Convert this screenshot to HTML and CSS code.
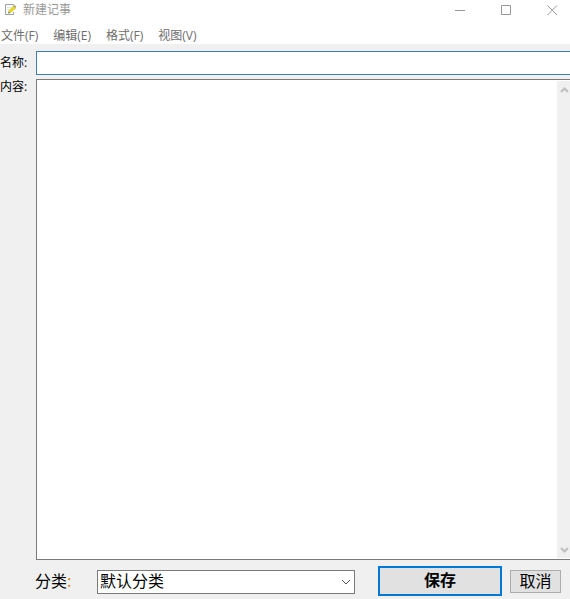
FILE: index.html
```html
<!DOCTYPE html>
<html lang="zh-CN">
<head>
<meta charset="utf-8">
<meta name="viewport" content="width=device-width, initial-scale=1">
<title>新建记事</title>
<link rel="stylesheet" href="styles.css">
</head>
<body>
<form class="window">
  <header class="titlebar">
    <svg class="app-icon" width="12" height="12" viewBox="0 0 12 12" aria-hidden="true">
      <path d="M8.500 1.500V.5h-8v10h8V8" fill="#fff" stroke="#9aa3a0"/>
      <path d="M2 3.500h4M2 5.500h2" stroke="#dde3e0"/>
      <path d="M3.500 9l.5-2.500 4.500-4.500 2.300 2-5 4.500z" fill="#e8d820" stroke="#c4b52c" stroke-width=".5"/>
      <path d="M8.300 2l1-1.200 2 1.900-1.100 1.200z" fill="#a5a274"/>
      <path d="M3 9.500l.7-2 1.500 1.400z" fill="#777"/>
    </svg>
    <h1 class="title">新建记事</h1>
    <div class="controls">
      <button type="button" class="control" aria-label="最小化"><svg width="11" height="11"><path d="M0 5.500h10"/></svg></button>
      <button type="button" class="control" aria-label="最大化"><svg width="11" height="11"><path d="M.5 .5h9v9h-9z"/></svg></button>
      <button type="button" class="control" aria-label="关闭"><svg width="11" height="11"><path d="M.5 .5l9.500 9.500M10 .5L.5 10"/></svg></button>
    </div>
  </header>
  <nav class="menu">
    <button type="button">文件(F)</button>
    <button type="button">编辑(E)</button>
    <button type="button">格式(F)</button>
    <button type="button">视图(V)</button>
  </nav>
  <main class="fields">
    <label for="name">名称:</label>
    <input id="name" class="name" type="text">
    <label for="content">内容:</label>
    <div class="editor">
      <textarea id="content"></textarea>
      <div class="scrollbar">
        <button type="button" aria-label="向上滚动"><svg width="10" height="8"><path d="M1 6l3.500-3.500L8 6"/></svg></button>
        <button type="button" aria-label="向下滚动"><svg width="10" height="8"><path d="M1 2l3.500 3.500L8 2"/></svg></button>
      </div>
    </div>
  </main>
  <footer class="actions">
    <label for="category">分类<span class="colon">:</span></label>
    <div class="combo">
      <select id="category"><option>默认分类</option></select>
      <svg class="arrow" width="10" height="6" aria-hidden="true"><path d="M1 1l4 4 4-4"/></svg>
    </div>
    <button type="submit" class="save">保存</button>
    <button type="button" class="cancel">取消</button>
  </footer>
</form>
</body>
</html>
```
FILE: styles.css
```css
* {
  box-sizing: border-box;
}

body {
  margin: 0;
  overflow: hidden;
  background: #f0f0f0;
  color: #000;
  font-family: "Open Sans", "Noto Sans CJK SC", sans-serif;
  font-size: 12px;
}

button,
input,
textarea,
select {
  margin: 0;
  padding: 0;
  border: 0;
  border-radius: 0;
  outline: 0;
  background: none;
  color: inherit;
  font: inherit;
}

svg {
  fill: none;
}

.window {
  display: flex;
  flex-direction: column;
  height: 100vh;
}

.titlebar {
  display: flex;
  align-items: center;
  height: 20px;
  padding-left: 5px;
  background: #fff;
}

.title {
  margin: 0 0 0 6px;
  color: #999;
  font-size: 12px;
  font-weight: 400;
  line-height: 22px;
}

.controls {
  display: flex;
  gap: 10px;
  margin-left: auto;
}

.control {
  display: flex;
  align-items: center;
  justify-content: center;
  width: 36px;
  height: 20px;
  stroke: #999;
}

.menu {
  display: flex;
  align-items: flex-end;
  gap: 15px;
  height: 24px;
  padding: 0 1px;
  background: #fff;
  color: #6d6d6d;
}

.menu button {
  height: 16px;
  line-height: 16px;
}

.fields {
  display: grid;
  flex: 1;
  grid-template: 24px minmax(0, 1fr) / 36px minmax(0, 1fr);
  row-gap: 4px;
  padding-top: 7px;
}

.fields label {
  line-height: 16px;
}

.fields label[for="name"] {
  line-height: 24px;
}

.name {
  width: 100%;
  padding: 0 4px;
  border: 1px solid #3c7fb1;
  border-right: 0;
  background: #fff;
}

.editor {
  display: flex;
  padding: 1px 0;
  border: 1px solid #7a7a7a;
  border-right: 0;
  background: #fff;
}

.editor textarea {
  flex: 1;
  min-width: 0;
  resize: none;
}

.scrollbar {
  display: flex;
  flex-direction: column;
  justify-content: space-between;
  width: 13px;
  background: #f0f0f0;
}

.scrollbar button {
  display: flex;
  align-items: center;
  justify-content: flex-end;
  height: 17px;
  stroke: #bfbfbf;
  stroke-width: 2;
}

.actions {
  display: flex;
  align-items: center;
  height: 39px;
  padding: 4px 9px 0 35px;
  font-family: "Noto Sans CJK SC", sans-serif;
  font-size: 16px;
  line-height: 20px;
}

.actions label {
  width: 62px;
  padding-bottom: 4px;
}

.colon {
  color: #d08a30;
}

.combo {
  display: grid;
  flex: 1;
  align-items: center;
  margin-right: 23px;
}

.combo select,
.combo .arrow {
  grid-area: 1 / 1;
}

.combo select {
  width: 100%;
  height: 24px;
  padding: 0 20px 4px 2px;
  border: 1px solid #7a7a7a;
  background: #fff;
  line-height: 18px;
  appearance: none;
}

.arrow {
  justify-self: end;
  margin-right: 4px;
  pointer-events: none;
  stroke: #505050;
}

.save {
  width: 124px;
  height: 30px;
  margin-right: 8px;
  padding-bottom: 4px;
  border: 2px solid #0078d7;
  background: #e1e1e1;
  font-weight: 700;
}

.cancel {
  width: 51px;
  height: 23px;
  padding-bottom: 4px;
  border: 1px solid #adadad;
  background: #e1e1e1;
  line-height: 18px;
}

.save,
.cancel {
  margin-bottom: 1px;
}
```
